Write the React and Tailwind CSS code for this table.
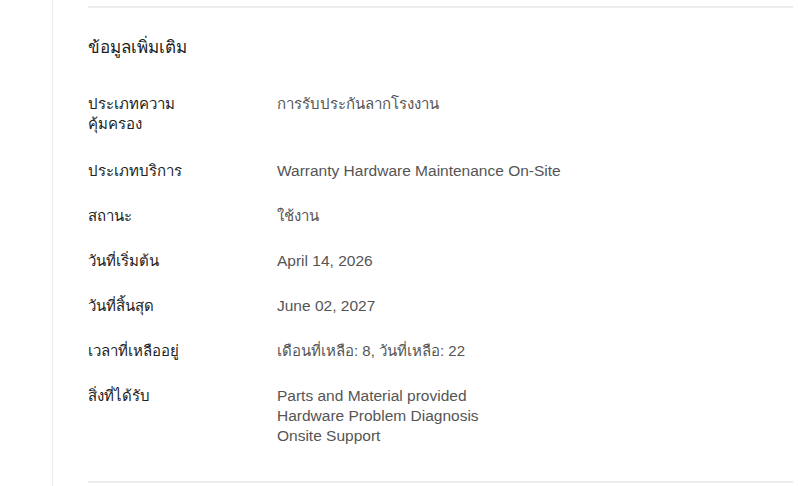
const rows = [
  { label: ['ประเภทความ', 'คุ้มครอง'], value: ['การรับประกันลากโรงงาน'], thai: true },
  { label: ['ประเภทบริการ'], value: ['Warranty Hardware Maintenance On-Site'] },
  { label: ['สถานะ'], value: ['ใช้งาน'], thai: true },
  { label: ['วันที่เริ่มต้น'], value: ['April 14, 2026'] },
  { label: ['วันที่สิ้นสุด'], value: ['June 02, 2027'] },
  { label: ['เวลาที่เหลืออยู่'], value: ['เดือนที่เหลือ: 8, วันที่เหลือ: 22'], thai: true },
  {
    label: ['สิ่งที่ได้รับ'],
    value: ['Parts and Material provided', 'Hardware Problem Diagnosis', 'Onsite Support'],
  },
];

const App = () => {
  return (
    <div className="w-[798px] h-[486px] flex bg-white overflow-hidden font-['Liberation_Sans','Noto_Sans',sans-serif]">
      {/* left rail */}
      <div className="w-[53px] shrink-0 border-r border-[#ececec]" />

      {/* content */}
      <div className="flex-1 pl-[35px] pr-[5px] pt-[6px]">
        <div className="border-t-2 border-[#ededed]">
          <h2 className="mt-[28px] text-[17px] leading-[24px] text-[#222]">ข้อมูลเพิ่มเติม</h2>

          <div className="mt-[34px] flex flex-col gap-[25px] pb-[35px] border-b-2 border-[#ededed]">
            {rows.map((row, i) => (
              <div key={i} className={`flex ${i === 0 ? 'mb-[2px]' : ''}`}>
                <div className="w-[189px] shrink-0 text-[15px] leading-[20px] text-[#222]">
                  {row.label.map((l) => (
                    <div key={l}>{l}</div>
                  ))}
                </div>
                <div
                  className={`leading-[20px] text-[#555] ${row.thai ? 'text-[15px]' : 'text-[15.5px]'}`}
                >
                  {row.value.map((v) => (
                    <div key={v}>{v}</div>
                  ))}
                </div>
              </div>
            ))}
          </div>
        </div>
      </div>
    </div>
  );
};

export default App;
